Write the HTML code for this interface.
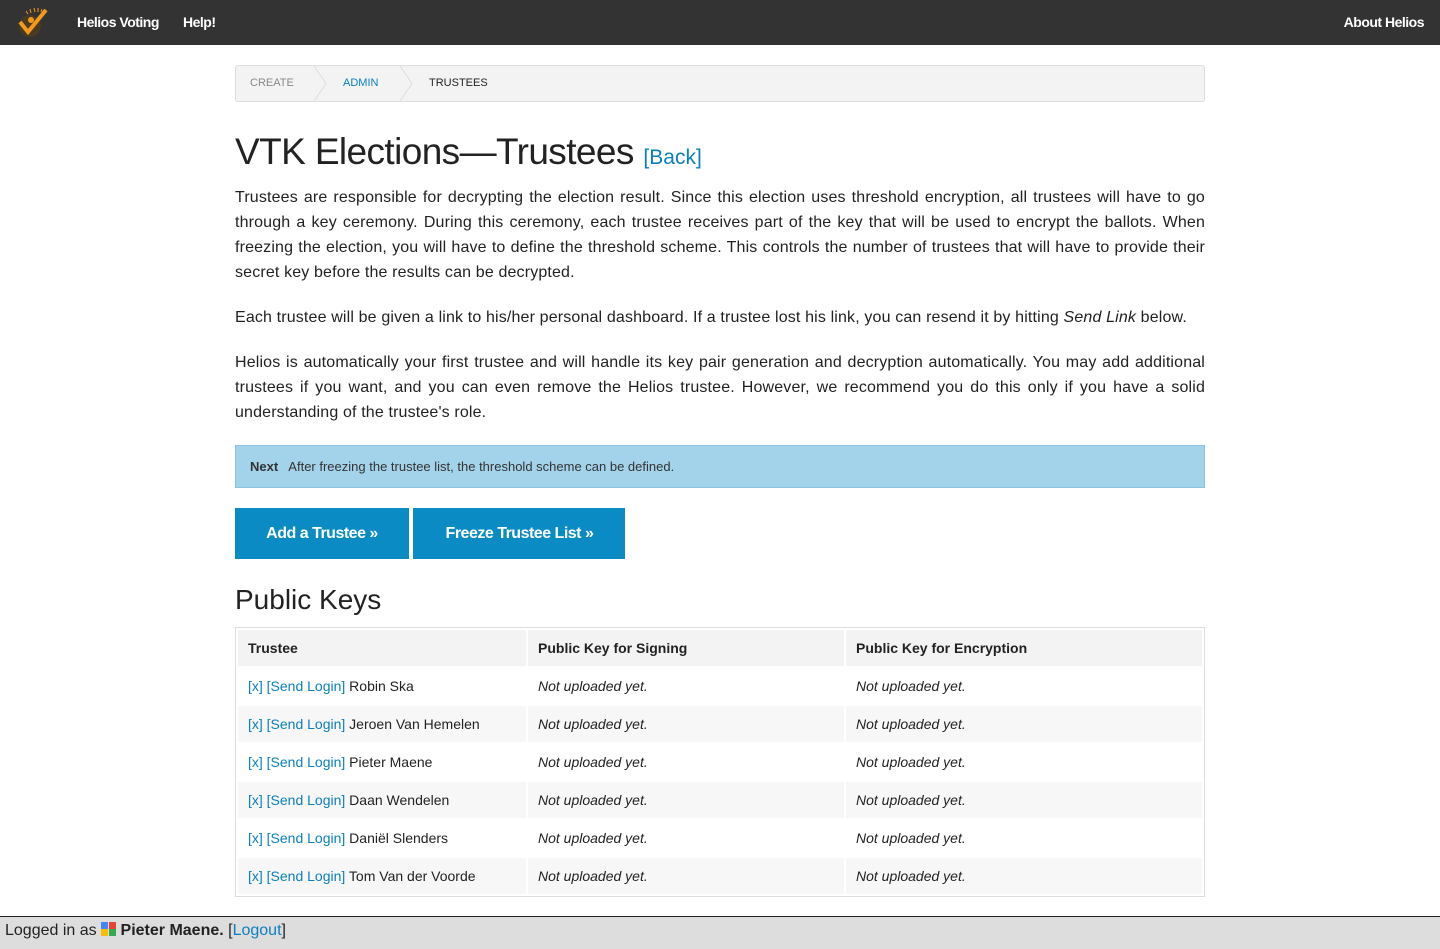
<!DOCTYPE html>
<html><head><meta charset="utf-8"><style>
body{margin:0;font-family:"Liberation Sans",sans-serif;color:#222;background:#fff;width:1440px;height:948px;overflow:hidden;position:relative}
.top{height:45px;background:#333;position:relative}
.top a{position:absolute;top:14px;color:#fff;font-size:14px;font-weight:bold;letter-spacing:-0.5px;text-decoration:none}
.wrap{position:absolute;left:235px;width:970px;top:65px}
.bc{height:35px;border:1px solid #ddd;background:#f3f3f3;border-radius:3px;font-size:11px;position:relative}
.bc span{position:absolute;top:11px}
.chev{position:absolute;top:0;width:14px;height:35px}
h1{font-size:37px;font-weight:normal;margin:28px 0 0;letter-spacing:-0.6px;line-height:44px}
h1 a{font-size:21px;color:#0b7fc0;text-decoration:none;letter-spacing:0}
p{font-size:16px;line-height:25px;text-align:justify;margin:5px 0 20px;letter-spacing:0.15px}
p+p{margin-top:20px}
.note{background:#a3d3ea;border:1px solid #8cc4df;height:41px;font-size:13px;color:#333;line-height:41px;padding-left:14px;margin-top:18px}
.btn{display:inline-block;background:#0a8bc4;color:#fff;font-weight:bold;font-size:16px;height:51px;line-height:51px;text-align:center;letter-spacing:-0.5px;vertical-align:top}
h2{font-size:28px;font-weight:normal;margin:25px 0 11px;line-height:32px}
table{width:970px;border:1px solid #ddd;border-spacing:2px;font-size:14px}
td,th{height:36px;padding:0 10px;text-align:left}
th{background:#f3f3f3}
tr.s td{background:#f7f7f7}
.l{color:#0b7fc0}
.foot{position:absolute;top:916px;left:0;width:1440px;height:32px;border-top:1px solid #222;background:#ddd;font-size:16px;line-height:28px;padding-left:5px}
</style></head><body>
<div class="top">
<svg style="position:absolute;left:14px;top:6px" width="36" height="32" viewBox="0 0 36 32"><circle cx="16" cy="20" r="11" fill="#4a3a22"/><path d="M6 16 L14 26 L32 4" stroke="#f39a1a" stroke-width="4" fill="none"/><circle cx="17" cy="14" r="3" fill="#f39a1a"/><path d="M20 2l1 4M24 2l0 4M28 3l-1 3M16 3l1 4M12 5l2 3" stroke="#f39a1a" stroke-width="1"/></svg>
<a style="left:77px">Helios Voting</a><a style="left:183px">Help!</a><a style="right:16px">About Helios</a></div>
<div class="wrap">
<div class="bc"><span style="left:14px;color:#888">CREATE</span>
<svg class="chev" style="left:78px" viewBox="0 0 14 35"><path d="M0 0L12 17.5L0 35" stroke="#ddd" fill="none"/></svg>
<span style="left:107px;color:#0b7fc0">ADMIN</span>
<svg class="chev" style="left:164px" viewBox="0 0 14 35"><path d="M0 0L12 17.5L0 35" stroke="#ddd" fill="none"/></svg>
<span style="left:193px;color:#222">TRUSTEES</span></div>
<h1>VTK Elections—Trustees <a>[Back]</a></h1>
<p>Trustees are responsible for decrypting the election result. Since this election uses threshold encryption, all trustees will have to go through a key ceremony. During this ceremony, each trustee receives part of the key that will be used to encrypt the ballots. When freezing the election, you will have to define the threshold scheme. This controls the number of trustees that will have to provide their secret key before the results can be decrypted.</p>
<p>Each trustee will be given a link to his/her personal dashboard. If a trustee lost his link, you can resend it by hitting <i>Send Link</i> below.</p>
<p>Helios is automatically your first trustee and will handle its key pair generation and decryption automatically. You may add additional trustees if you want, and you can even remove the Helios trustee. However, we recommend you do this only if you have a solid understanding of the trustee's role.</p>
<div class="note"><b>Next</b>&nbsp;&nbsp; After freezing the trustee list, the threshold scheme can be defined.</div>
<div style="margin-top:20px"><span class="btn" style="width:174px">Add a Trustee »</span> <span class="btn" style="width:212px">Freeze Trustee List »</span></div>
<h2>Public Keys</h2>
<table>
<tr><th style="width:268px">Trustee</th><th style="width:296px">Public Key for Signing</th><th>Public Key for Encryption</th></tr>
<tr><td><span class="l">[x]</span> <span class="l">[Send Login]</span> Robin Ska</td><td><i>Not uploaded yet.</i></td><td><i>Not uploaded yet.</i></td></tr>
<tr class="s"><td><span class="l">[x]</span> <span class="l">[Send Login]</span> Jeroen Van Hemelen</td><td><i>Not uploaded yet.</i></td><td><i>Not uploaded yet.</i></td></tr>
<tr><td><span class="l">[x]</span> <span class="l">[Send Login]</span> Pieter Maene</td><td><i>Not uploaded yet.</i></td><td><i>Not uploaded yet.</i></td></tr>
<tr class="s"><td><span class="l">[x]</span> <span class="l">[Send Login]</span> Daan Wendelen</td><td><i>Not uploaded yet.</i></td><td><i>Not uploaded yet.</i></td></tr>
<tr><td><span class="l">[x]</span> <span class="l">[Send Login]</span> Daniël Slenders</td><td><i>Not uploaded yet.</i></td><td><i>Not uploaded yet.</i></td></tr>
<tr class="s"><td><span class="l">[x]</span> <span class="l">[Send Login]</span> Tom Van der Voorde</td><td><i>Not uploaded yet.</i></td><td><i>Not uploaded yet.</i></td></tr>
</table>
</div>
<div class="foot">Logged in as <svg width="15" height="14" style="vertical-align:-1px"><rect x="0" y="0" width="7" height="7" fill="#4285f4"/><rect x="8" y="0" width="7" height="7" fill="#ea4335"/><rect x="0" y="7" width="7" height="7" fill="#fbbc05"/><rect x="8" y="7" width="7" height="7" fill="#34a853"/></svg> <b>Pieter Maene.</b> [<span class="l">Logout</span>]</div>
</body></html>
